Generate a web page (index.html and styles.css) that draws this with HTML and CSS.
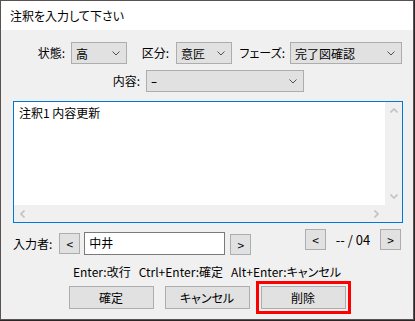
FILE: index.html
```html
<!DOCTYPE html>
<html>
<head lang="ja">
    <meta charset="UTF-8">
    <title>注釈を入力して下さい</title>
    <link rel="stylesheet" href="styles.css">
</head>
<body>
<div class="dialog">
    <div class="title_bar">注釈を入力して下さい</div>
    <div class="body">
        <div class="row row_top">
            <label class="lbl lbl_state">状態:</label>
            <div class="combo combo_state"><span>高</span><svg width="8" height="5" viewBox="0 0 8 5"><polyline points="0.5,0.5 4,4 7.5,0.5"/></svg></div>
            <label class="lbl lbl_kind">区分:</label>
            <div class="combo combo_kind"><span>意匠</span><svg width="8" height="5" viewBox="0 0 8 5"><polyline points="0.5,0.5 4,4 7.5,0.5"/></svg></div>
            <label class="lbl lbl_phase">フェーズ:</label>
            <div class="combo combo_phase"><span>完了図確認</span><svg width="8" height="5" viewBox="0 0 8 5"><polyline points="0.5,0.5 4,4 7.5,0.5"/></svg></div>
        </div>
        <div class="row row_content">
            <label class="lbl lbl_content">内容:</label>
            <div class="combo combo_content"><span>ｰ</span><svg width="8" height="5" viewBox="0 0 8 5"><polyline points="0.5,0.5 4,4 7.5,0.5"/></svg></div>
        </div>

        <div class="memo">
            <div class="memo_text">注釈1 内容更新</div>
            <div class="vbar">
                <div class="arrow"><svg width="8" height="5" viewBox="0 0 8 5"><polyline points="0.5,4.5 4,1 7.5,4.5"/></svg></div>
                <div class="arrow"><svg width="8" height="5" viewBox="0 0 8 5"><polyline points="0.5,0.5 4,4 7.5,0.5"/></svg></div>
            </div>
            <div class="hbar">
                <div class="arrow"><svg width="5" height="8" viewBox="0 0 5 8"><polyline points="4.5,0.5 1,4 4.5,7.5"/></svg></div>
                <div class="arrow"><svg width="5" height="8" viewBox="0 0 5 8"><polyline points="0.5,0.5 4,4 0.5,7.5"/></svg></div>
            </div>
            <div class="corner"></div>
        </div>

        <div class="row row_user">
            <div class="user">
                <label class="lbl lbl_user">入力者:</label>
                <button class="btn_small btn_prev_user">&lt;</button>
                <div class="user_input">中井</div>
                <button class="btn_small btn_next_user">&gt;</button>
            </div>
            <div class="pager">
                <button class="btn_small">&lt;</button>
                <span class="page_text">-- / 04</span>
                <button class="btn_small">&gt;</button>
            </div>
        </div>

        <p class="hint">Enter:改行&nbsp;&nbsp;&nbsp;Ctrl+Enter:確定&nbsp;&nbsp;&nbsp;Alt+Enter:キャンセル</p>

        <div class="actions">
            <button class="btn">確定</button>
            <button class="btn">キャンセル</button>
            <button class="btn btn_focus">削除</button>
        </div>
    </div>
</div>
</body>
</html>
```

FILE: styles.css
```css
*{
    margin: 0;
    padding: 0;
    box-sizing: border-box;
}
body{
    background: #2e2626;
    font-family: "Noto Sans CJK JP", "Noto Sans", sans-serif;
    font-size: 12px;
    font-feature-settings: "palt";
    color: #000000;
}
.dialog{
    width: 414px;
    height: 320px;
    border: 1px solid #5a5252;
    background: #f0f0f0;
}
.title_bar{
    height: 29px;
    line-height: 29px;
    background: #ffffff;
    padding-left: 9px;
}
.body{
    padding-top: 12px;
}
.row{
    display: flex;
    align-items: center;
}
.lbl{
    display: block;
    line-height: 22px;
    text-align: right;
    white-space: nowrap;
    padding-right: 3px;
}
.lbl_state{ width: 67px; }
.lbl_kind{ width: 45px; }
.lbl_phase{ width: 56px; }
.lbl_content{ width: 142px; }

.combo{
    height: 22px;
    border: 1px solid #adadad;
    background: #e1e1e1;
    display: flex;
    align-items: center;
    justify-content: space-between;
    padding: 0 6px 0 4px;
}
.combo svg polyline{
    fill: none;
    stroke: #505050;
    stroke-width: 1;
}
.combo_state{ width: 56px; margin-left: 3px; }
.combo_kind{ width: 56px; margin-left: 4px; }
.combo_phase{ width: 112px; margin-left: 2px; }
.combo_content{ width: 158px; margin-left: 3px; }
.row_content{
    margin-top: 6px;
}

.memo{
    width: 390px;
    height: 122px;
    margin: 9px 0 0 12px;
    border: 1px solid #0078d7;
    background: #ffffff;
    display: grid;
    grid-template-columns: 1fr 17px;
    grid-template-rows: 1fr 17px;
}
.memo_text{
    padding: 3px 5px;
    line-height: 16px;
}
.vbar, .hbar, .corner{
    background: #f0f0f0;
    display: flex;
    justify-content: space-between;
}
.vbar{
    flex-direction: column;
}
.arrow{
    width: 17px;
    height: 17px;
    display: flex;
    align-items: center;
    justify-content: center;
}
.arrow polyline{
    fill: none;
    stroke: #c2c2c2;
    stroke-width: 1.6;
}

.row_user{
    margin-top: 6px;
    align-items: flex-start;
    justify-content: space-between;
    padding: 0 12px;
    height: 27px;
}
.user{
    display: flex;
    align-items: center;
    margin-top: 3px;
}
.lbl_user{
    line-height: 23px;
    text-align: left;
    padding-right: 0;
}
.btn_small{
    width: 21px;
    height: 21px;
    border: 1px solid #adadad;
    background: #e1e1e1;
    font: inherit;
    font-size: 12px;
    line-height: 18px;
    color: #000000;
}
.btn_prev_user{
    margin-left: 7px;
}
.user_input{
    width: 141px;
    height: 23px;
    margin-left: 4px;
    border: 1px solid #7a7a7a;
    background: #ffffff;
    padding: 0 4px;
    line-height: 20px;
}
.btn_next_user{
    margin-left: 5px;
    margin-top: 2px;
}
.pager{
    display: flex;
    align-items: center;
}
.page_text{
    width: 54px;
    text-align: center;
    line-height: 21px;
    font-size: 13px;
}

.hint{
    margin-top: 8px;
    line-height: 16px;
    text-align: center;
}

.actions{
    margin-top: 6px;
    display: flex;
    justify-content: center;
    gap: 11px;
}
.btn{
    width: 85px;
    height: 23px;
    border: 1px solid #adadad;
    background: #e1e1e1;
    font: inherit;
    color: #000000;
}
.btn_focus{
    outline: 3px solid #ff0000;
    outline-offset: 2px;
}
```
